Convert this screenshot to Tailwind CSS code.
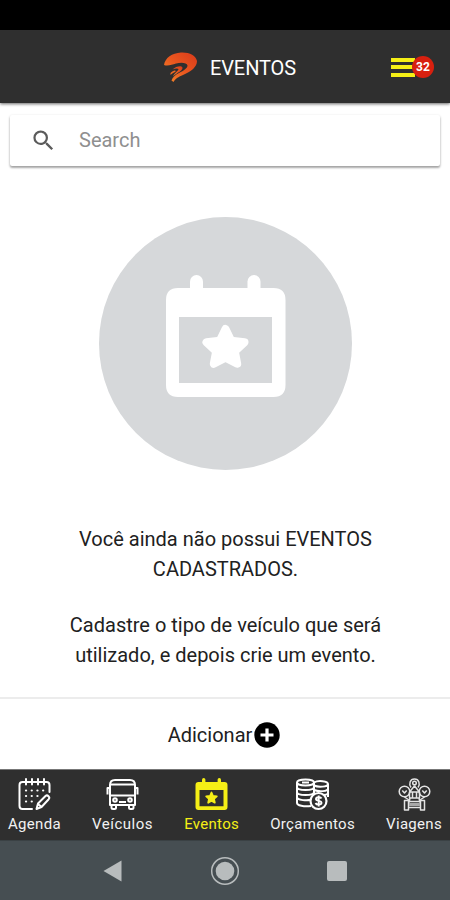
<!DOCTYPE html>
<html lang="pt-BR">
<head>
    <meta charset="UTF-8">
    <meta name="viewport" content="width=device-width, initial-scale=1.0">
    <title>Eventos</title>
    <script src="https://cdn.jsdelivr.net/npm/@tailwindcss/browser@4"></script>
</head>
<body class="bg-white font-['Roboto',sans-serif] text-[#212121]">
    <div class="flex h-[900px] w-[450px] flex-col overflow-hidden">

        <!-- Status bar -->
        <div class="h-[30px] shrink-0 bg-black"></div>

        <header class="z-10 grid h-[73px] shrink-0 grid-cols-[1fr_auto_1fr] items-center bg-[#2f2f2f] pt-px shadow-[0_1px_3px_rgba(0,0,0,0.6)]">
            <span></span>
            <div class="flex items-center gap-[13px] pl-[10px]">
                <svg class="h-[31px] w-[33px]" viewBox="0 0 33 31">
                    <defs>
                        <linearGradient id="flame" x1="1" y1="0" x2="0" y2="1">
                            <stop offset="0" stop-color="#d93a1a"/>
                            <stop offset="0.5" stop-color="#e9561f"/>
                            <stop offset="1" stop-color="#f58a2a"/>
                        </linearGradient>
                    </defs>
                    <path fill="url(#flame)" d="M0 13C1 6 8 1 17 .5C25 0 32 3.500 33 9C33 15 27 19.500 20 22.500C14 25 11 27 9.500 30L7.500 28.500C8.500 25 12 22.500 15 21C20 18.500 23.500 16 23.500 13.500C23 10.500 17 10 12 11.500C8 12.500 4 14.500 0 13Z"/>
                    <path fill="url(#flame)" d="M8.500 17.500C12 14 18.500 13 18.500 16C18.500 19 13 20.500 9 24.500C10 21.500 14.500 18.500 14.500 17C14 16 11 16.500 8.500 17.500Z"/>
                    <path fill="#ee6a22" d="M6.500 21C8.500 18.500 11.500 17.800 11.800 19C11.500 20.300 9 20.500 6.500 23Z"/>
                </svg>
                <h1 class="relative top-px text-[20px] leading-6 tracking-[-0.1px] text-white">EVENTOS</h1>
            </div>
            <div class="flex items-center justify-end pr-4">
                <div class="flex w-[24px] flex-col gap-[3.500px]">
                    <span class="h-[4px] bg-[#f5ef16]"></span>
                    <span class="h-[4px] bg-[#f5ef16]"></span>
                    <span class="h-[4px] bg-[#f5ef16]"></span>
                </div>
                <span class="z-10 -ml-[3px] flex size-[22px] items-center justify-center rounded-full bg-[#d8200f] text-[12px] font-bold text-white">32</span>
            </div>
        </header>

        <main class="flex flex-1 flex-col items-center">
            <div class="mt-[12px] flex h-[51px] w-[430px] shrink-0 items-center rounded-[2px] bg-white pb-px pl-[20px] shadow-[0_2px_2px_rgba(0,0,0,0.25),0_1px_3px_rgba(0,0,0,0.2)]">
                <svg class="size-[27px]" viewBox="0 0 24 24" fill="#5b5b5b">
                    <path d="M15.500 14h-.79l-.28-.27A6.471 6.471 0 0 0 16 9.500 6.500 6.500 0 1 0 9.500 16c1.610 0 3.090-.59 4.230-1.570l.27.28v.79l5 4.990L20.490 19l-4.990-5zm-6 0C7.010 14 5 11.990 5 9.500S7.010 5 9.500 5 14 7.010 14 9.500 11.990 14 9.500 14z"/>
                </svg>
                <span class="ml-[22px] text-[20px] leading-6 text-[#8f8f8f]">Search</span>
            </div>

            <svg class="mt-[51px] size-[253px] shrink-0" viewBox="0 0 253 253">
                <circle cx="126.500" cy="126.500" r="126.500" fill="#d6d8da"/>
                <g fill="#fff">
                    <path fill-rule="evenodd" d="M79 71H174.500Q186.500 71 186.500 83V168Q186.500 180 174.500 180H79Q67 180 67 168V83Q67 71 79 71ZM80 100V166H173V100Z"/>
                    <rect x="91" y="58" width="13" height="20" rx="6.500"/>
                    <rect x="148.500" y="58" width="13" height="20" rx="6.500"/>
                    <path stroke="#fff" stroke-width="8" stroke-linejoin="round" d="M126.500 112L132.200 123.700L145.500 125.200L135.800 134.200L138.200 146.800L126.500 140.800L114.800 146.800L117.200 134.200L107.500 125.200L120.800 123.700Z"/>
                </g>
            </svg>

            <div class="mt-[54px] pl-px text-center text-[20px] leading-[30px]">
                <p>Você ainda não possui EVENTOS<br>CADASTRADOS.</p>
                <p class="mt-[26px]">Cadastre o tipo de veículo que será<br>utilizado, e depois crie um evento.</p>
            </div>
        </main>

        <div class="flex h-[72px] shrink-0 items-center justify-center gap-[2px] border-t-2 border-[#ececec] pt-px pr-[2px]">
            <span class="text-[20px] leading-6">Adicionar</span>
            <svg class="size-[26px]" viewBox="0 0 26 26">
                <circle cx="13" cy="13" r="12.700" fill="#000"/>
                <path d="M13 6.500V19.500M6.500 13H19.500" stroke="#fff" stroke-width="3.200"/>
            </svg>
        </div>

        <nav class="flex h-[71px] shrink-0 justify-between border-t border-[#777] bg-[#2f2f2f] px-[8px] pt-[8px] text-[15px] leading-[18px] tracking-[0.3px] text-[#f2f2f2]">
            <a class="flex flex-col items-center gap-[4px]">
                <svg class="size-[33px]" viewBox="0 0 33 33" fill="none" stroke="#fff" stroke-width="2" stroke-linecap="round" stroke-linejoin="round">
                    <path d="M14 31H4.500Q1.500 31 1.500 28V7Q1.500 4 4.500 4H28.500Q31.500 4 31.500 7V14M8 1V6.500M14 1V6.500M20 1V6.500M26 1V6.500"/>
                    <path stroke-width="2.200" stroke-dasharray="0.100 5.600" d="M8 12.500H26M8 18H22M8 23.500H18"/>
                    <path d="M18.500 31L20 25.500L27.500 18Q29 16.700 30.500 18.200Q32 19.700 30.700 21.200L23.500 29Z M20 26L23 28.500"/>
                </svg>
                <span>Agenda</span>
            </a>
            <a class="flex flex-col items-center gap-[4px]">
                <svg class="size-[33px]" viewBox="0 0 33 33" fill="none" stroke="#fff" stroke-width="2" stroke-linejoin="round">
                    <path d="M4 27V7Q4 2 9 2H24Q29 2 29 7V27ZM4 6.500H29M4 17.500H29M4 10H1.500V16.500M29 10H31.500V16.500M5.500 27V29.500Q5.500 31 7 31H8.500Q10 31 10 29.500V27M23 27V29.500Q23 31 24.500 31H26Q27.500 31 27.500 29.500V27M13 24H20"/>
                    <circle cx="9" cy="22" r="1.800"/>
                    <circle cx="24" cy="22" r="1.800"/>
                </svg>
                <span class="tracking-[0.5px]">Veículos</span>
            </a>
            <a class="flex flex-col items-center gap-[4px] text-[#f5ef16]">
                <svg class="size-[33px]" viewBox="0 0 33 33" fill="currentColor">
                    <path fill-rule="evenodd" d="M3.500 4H29.500Q32.500 4 32.500 7V29Q32.500 32 29.500 32H3.500Q.5 32 .5 29V7Q.5 4 3.500 4ZM4.500 12V28.300H28.500V12Z"/>
                    <rect x="7" y="0" width="3.400" height="6" rx="1.700"/>
                    <rect x="22.600" y="0" width="3.400" height="6" rx="1.700"/>
                    <path stroke="currentColor" stroke-width="1.800" stroke-linejoin="round" d="M16.500 14.500L18 18L21.800 18.400L19 20.900L19.800 24.700L16.500 22.800L13.200 24.700L14 20.900L11.200 18.400L15 18Z"/>
                </svg>
                <span>Eventos</span>
            </a>
            <a class="flex flex-col items-center gap-[4px]">
                <svg class="size-[33px]" viewBox="0 0 33 33" fill="none" stroke="#fff" stroke-width="2">
                    <ellipse cx="9.500" cy="4.500" rx="8.500" ry="3"/>
                    <path d="M1 4.500V25C1 27.500 8 29 15 28M18 4.500V18M1 9C1 13 18 13 18 9M1 14C1 18 18 18 18 14M1 19C1 22.500 12 23 15 21.500M6 4.500H13"/>
                    <path d="M18 4.500C22 2 32 3 32 6C32 9 22 9.500 18 7.500M32 6V19M18 12C23 14 32 13.500 32 10.500M18 16C23 17.500 32 17.500 32 15"/>
                    <circle cx="22.500" cy="23" r="8" fill="#2f2f2f" stroke-width="2.200"/>
                    <path stroke-width="1.900" d="M25.500 20.500C24.500 18.500 20 19 20 21C20 23.500 25.500 22.200 25.500 24.800C25.500 27.200 20.500 27.200 19.500 25M22.700 17.500V28.500"/>
                </svg>
                <span>Orçamentos</span>
            </a>
            <a class="flex flex-col items-center gap-[4px]">
                <svg class="size-[33px]" viewBox="0 0 33 33" fill="none" stroke="#e4e4e4" stroke-width="1.500" stroke-linejoin="round">
                    <!-- map pins around a road -->
                    <path d="M13 9.500C10.500 6 12 1 16.500 1C21 1 22.500 6 20 9.500"/>
                    <circle cx="16.500" cy="5" r="1.800"/>
                    <path d="M16.500 8L11.500 14V20H21.500V14ZM12 14H21M14.500 14V20M18.500 14V20"/>
                    <circle cx="6.500" cy="13.500" r="5.300"/>
                    <circle cx="26.500" cy="13.500" r="5.300"/>
                    <path d="M4.300 12.500L6.500 15L8.700 12.500M24.300 12.500L26.500 15L28.700 12.500M6.500 19L11 22M26.500 19L22 22"/>
                    <path d="M6.500 22.500H10.500V32H6.500ZM22.500 22.500H26.500V32H22.500ZM10.500 23.500H22.500M10.500 29.500H22.500M12 20L11 24.500M21 20L22 24.500"/>
                    <path stroke="#a8a8a8" stroke-width="3" d="M11 26.500H22"/>
                </svg>
                <span>Viagens</span>
            </a>
        </nav>

        <!-- Android system buttons -->
        <div class="flex h-[60px] shrink-0 items-center justify-between border-t border-[#3a4144] bg-[#464e52] px-[103px]">
            <svg class="h-[22px] w-[19px]" viewBox="0 0 19 22" fill="#b8bcbd"><path d="M.5 11L18.500 .5V21.500Z"/></svg>
            <svg class="size-[30px]" viewBox="0 0 30 30">
                <circle cx="15" cy="15" r="13.300" fill="none" stroke="#b8bcbd" stroke-width="1.500"/>
                <circle cx="15" cy="15" r="9.300" fill="#b8bcbd"/>
            </svg>
            <span class="size-[20px] rounded-[2px] bg-[#b8bcbd]"></span>
        </div>
    </div>
</body>
</html>
